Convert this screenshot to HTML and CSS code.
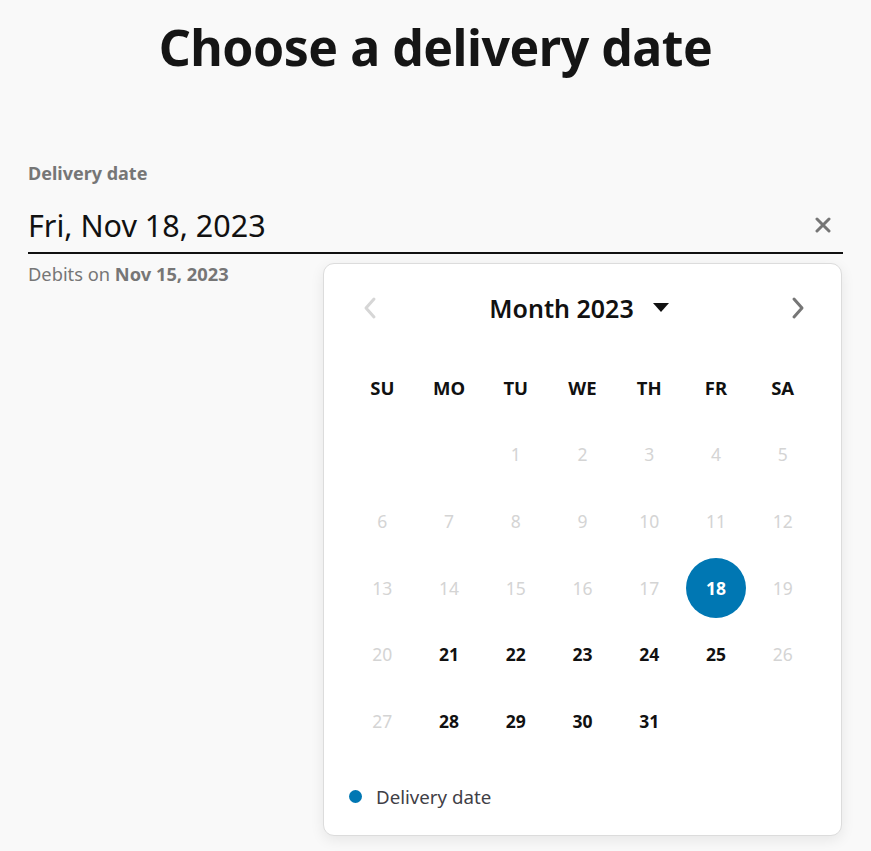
FILE: index.html
```html
<!DOCTYPE html>
<html lang="en">
<head>
<meta charset="utf-8">
<title>Choose a delivery date</title>
<link rel="stylesheet" href="styles.css">
</head>
<body>
<main class="page">
  <h1 class="title">Choose a delivery date</h1>

  <div class="field">
    <label class="field-label" for="delivery">Delivery date</label>
    <div class="field-input">
      <input id="delivery" class="field-value" type="text" value="Fri, Nov 18, 2023" readonly>
      <button class="clear-btn" type="button" aria-label="Clear date">
        <svg width="16" height="16" viewBox="0 0 16 16"><path d="M2 2 L14 14 M14 2 L2 14" stroke="#767676" stroke-width="3" stroke-linecap="round"/></svg>
      </button>
    </div>
    <p class="field-hint">Debits on <strong>Nov 15, 2023</strong></p>

    <div class="calendar" role="dialog" aria-label="Calendar">
      <div class="cal-header">
        <button class="cal-nav is-disabled" type="button" aria-label="Previous month">
          <svg width="14" height="24" viewBox="0 0 14 24"><path d="M11 3 L3 12 L11 21" fill="none" stroke="currentColor" stroke-width="3" stroke-linecap="round" stroke-linejoin="round"/></svg>
        </button>
        <button class="cal-month" type="button">
          <span>Month 2023</span>
          <svg width="16" height="10" viewBox="0 0 16 10"><path d="M0 0 H16 L8 9 Z" fill="#111"/></svg>
        </button>
        <button class="cal-nav" type="button" aria-label="Next month">
          <svg width="14" height="24" viewBox="0 0 14 24"><path d="M3 3 L11 12 L3 21" fill="none" stroke="currentColor" stroke-width="3" stroke-linecap="round" stroke-linejoin="round"/></svg>
        </button>
      </div>

      <div class="cal-grid">
        <div class="wd">SU</div><div class="wd">MO</div><div class="wd">TU</div><div class="wd">WE</div><div class="wd">TH</div><div class="wd">FR</div><div class="wd">SA</div>

        <div class="day"></div><div class="day"></div>
        <div class="day off">1</div><div class="day off">2</div><div class="day off">3</div><div class="day off">4</div><div class="day off">5</div>

        <div class="day off">6</div><div class="day off">7</div><div class="day off">8</div><div class="day off">9</div><div class="day off">10</div><div class="day off">11</div><div class="day off">12</div>

        <div class="day off">13</div><div class="day off">14</div><div class="day off">15</div><div class="day off">16</div><div class="day off">17</div><div class="day selected"><span>18</span></div><div class="day off">19</div>

        <div class="day off">20</div><div class="day">21</div><div class="day">22</div><div class="day">23</div><div class="day">24</div><div class="day">25</div><div class="day off">26</div>

        <div class="day off">27</div><div class="day">28</div><div class="day">29</div><div class="day">30</div><div class="day">31</div><div class="day"></div><div class="day"></div>
      </div>

      <div class="cal-legend">
        <span class="legend-dot"></span>
        <span>Delivery date</span>
      </div>
    </div>
  </div>
</main>
</body>
</html>
```

FILE: styles.css
```css
* {
  box-sizing: border-box;
}

html, body {
  margin: 0;
  min-height: 100vh;
  background: #f9f9f9;
  color: #111;
  font-family: "Noto Sans", "Open Sans", sans-serif;
}

.page {
  min-height: 100vh;
  padding: 0 28px;
}

.title {
  margin: 0;
  padding-top: 16px;
  text-align: center;
  font-size: 50px;
  line-height: 62px;
  font-weight: 700;
  letter-spacing: -0.5px;
  color: #151515;
}

.field {
  position: relative;
  margin-top: 83px;
}

.field-label {
  display: block;
  font-size: 18px;
  line-height: 24px;
  font-weight: 700;
  color: #767676;
}

.field-input {
  display: flex;
  align-items: center;
  margin-top: 12px;
  border-bottom: 2px solid #111;
  height: 57px;
}

.field-value {
  flex: 1;
  min-width: 0;
  border: 0;
  padding: 0;
  background: transparent;
  font: inherit;
  font-size: 30.5px;
  line-height: 40px;
  color: #111;
  outline: none;
}

.clear-btn {
  display: flex;
  align-items: center;
  justify-content: center;
  width: 40px;
  height: 40px;
  padding: 0;
  border: 0;
  background: transparent;
}

.field-hint {
  margin: 8px 0 0;
  font-size: 18.3px;
  line-height: 24px;
  color: #767676;
}

.field-hint strong {
  font-weight: 700;
}

/* Dropdown calendar, anchored under the input */
.calendar {
  position: absolute;
  top: 102px;
  right: 1px;
  width: 519px;
  padding: 19px 25px 26px;
  background: #fff;
  border: 1px solid #dcdcdc;
  border-radius: 11px;
  box-shadow: 0 4px 14px rgba(0, 0, 0, 0.08);
}

.cal-header {
  display: flex;
  align-items: center;
  justify-content: space-between;
  height: 50px;
  padding: 0 11px 0 14px;
}

.cal-nav {
  display: flex;
  padding: 0;
  border: 0;
  background: transparent;
  color: #767676;
}

.cal-nav.is-disabled {
  color: #d6d6d6;
}

.cal-month {
  display: flex;
  align-items: center;
  gap: 19px;
  padding: 0;
  border: 0;
  margin-right: 10px;
  background: transparent;
  font: inherit;
  font-size: 25px;
  font-weight: 600;
  color: #111;
}

.cal-grid {
  display: grid;
  grid-template-columns: repeat(7, 1fr);
  grid-auto-rows: 66.75px;
  margin-top: 21px;
}

.wd,
.day {
  display: flex;
  align-items: center;
  justify-content: center;
  font-size: 17.5px;
  font-weight: 700;
  color: #111;
}

.wd {
  font-size: 18.5px;
}

.day.off {
  font-weight: 400;
  color: #d4d4d4;
}

.day.selected span {
  display: flex;
  align-items: center;
  justify-content: center;
  width: 60px;
  height: 60px;
  border-radius: 50%;
  background: #0077b3;
  color: #fff;
}

.cal-legend {
  display: flex;
  align-items: center;
  gap: 14px;
  margin-top: 30px;
  padding-left: 0;
  font-size: 18.7px;
  line-height: 24px;
  color: #3f4046;
}

.legend-dot {
  width: 13px;
  height: 13px;
  border-radius: 50%;
  background: #0077b3;
}
```
